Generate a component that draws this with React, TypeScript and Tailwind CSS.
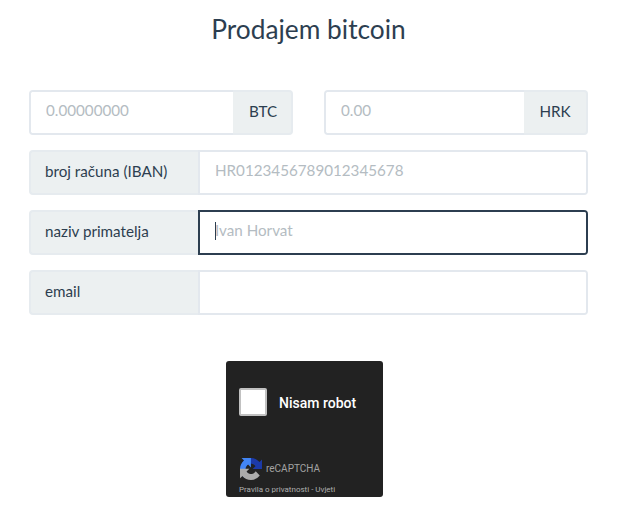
const inputCls =
  "w-full min-w-0 h-full bg-white px-[15px] pb-[5px] text-[15.2px] text-[#2c3e50] outline-none placeholder:text-[#b4bcc2]";
const addonCls =
  "flex items-center bg-[#ecf0f1] border-2 border-[#e6ebef] pb-[2px] text-[15.2px] text-[#2c3e50]";

function RecaptchaLogo() {
  return (
    <svg width="22" height="24" viewBox="0 0 64 64" className="shrink-0">
      <path d="M64 31.955l-.033-1.37V4.687l-7.16 7.16C50.948 4.674 42.033.093 32.05.093c-10.4 0-19.622 4.96-25.458 12.64l11.736 11.86a15.55 15.55 0 0 1 4.754-5.334c2.05-1.6 4.952-2.906 8.968-2.906.485 0 .86.057 1.135.163 4.976.393 9.288 3.14 11.828 7.124l-8.307 8.307L64 31.953" fill="#1c3aa9" />
      <path d="M31.862 0l-1.37.033H4.594l7.16 7.16C4.58 13.052 0 21.967 0 31.95c0 10.4 4.96 19.622 12.64 25.458l11.86-11.736a15.55 15.55 0 0 1-5.334-4.754c-1.6-2.05-2.906-4.952-2.906-8.968 0-.485.057-.86.163-1.135.393-4.976 3.14-9.288 7.124-11.828l8.307 8.307L31.86 0" fill="#4285f4" />
      <path d="M.001 31.955l.033 1.37v25.898l7.16-7.16c5.86 7.173 14.774 11.754 24.76 11.754 10.4 0 19.622-4.96 25.458-12.64L45.676 38.32a15.55 15.55 0 0 1-4.754 5.334c-2.05 1.6-4.952 2.906-8.968 2.906-.485 0-.86-.057-1.135-.163-4.976-.393-9.288-3.14-11.828-7.124l8.307-8.307-27.3-.01" fill="#ababab" />
    </svg>
  );
}

export default function App() {
  return (
    <div className="w-[625px] h-[527px] bg-white overflow-hidden font-['Lato',sans-serif] text-[#2c3e50]">
      <h1 className="pt-[11px] pr-[8px] text-center text-[26.3px] leading-[36px] font-normal text-[#2c3e50]">
        Prodajem bitcoin
      </h1>

      <div className="mt-[43px] ml-[29px] w-[559px] flex flex-col gap-[15px]">
        <div className="flex justify-between">
          <div className="flex w-[264px] h-[45px]">
            <div className="flex-1 min-w-0 border-2 border-r-0 border-[#e3e8ee] rounded-l-[4px] overflow-hidden">
              <input className={inputCls} placeholder="0.00000000" />
            </div>
            <div className={addonCls + " w-[60px] justify-center pl-[2px] rounded-r-[4px] border-l-0"}>BTC</div>
          </div>
          <div className="flex w-[264px] h-[45px]">
            <div className="flex-1 min-w-0 border-2 border-r-0 border-[#e3e8ee] rounded-l-[4px] overflow-hidden">
              <input className={inputCls} placeholder="0.00" />
            </div>
            <div className={addonCls + " w-[64px] justify-center rounded-r-[4px] border-l-0"}>HRK</div>
          </div>
        </div>

        <div className="flex h-[45px]">
          <div className={addonCls + " w-[169px] pl-[14px] rounded-l-[4px] border-r-0"}>broj računa (IBAN)</div>
          <div className="flex-1 min-w-0 border-2 border-[#e3e8ee] rounded-r-[4px] overflow-hidden">
            <input className={inputCls} placeholder="HR0123456789012345678" />
          </div>
        </div>

        <div className="flex h-[45px]">
          <div className={addonCls + " w-[169px] pl-[14px] rounded-l-[4px] border-r-0"}>naziv primatelja</div>
          <div className="relative flex-1 min-w-0 border-2 border-[#2c3e50] rounded-r-[4px] overflow-hidden">
            <input className={inputCls} placeholder="Ivan Horvat" />
            <span className="absolute left-[15px] top-[10px] h-[18px] w-px bg-[#2c3e50]" />
          </div>
        </div>

        <div className="flex h-[45px]">
          <div className={addonCls + " w-[169px] pl-[14px] rounded-l-[4px] border-r-0"}>email</div>
          <div className="flex-1 min-w-0 border-2 border-[#e3e8ee] rounded-r-[4px] overflow-hidden">
            <input className={inputCls} />
          </div>
        </div>
      </div>

      <div className="mt-[46px] ml-[226px] w-[157px] h-[136px] bg-[#222222] rounded-[3px] font-['Roboto',sans-serif] flex flex-col">
        <div className="flex items-center gap-[12px] pl-[13px] pt-[27px]">
          <div className="w-[28px] h-[28px] bg-white border-2 border-[#c1c1c1] rounded-[2px]" />
          <span className="text-[14px] mt-[3px] font-medium text-white">Nisam robot</span>
        </div>
        <div className="mt-auto pl-[14px] pb-[2px]">
          <div className="flex items-center gap-[4px]">
            <RecaptchaLogo />
            <span className="text-[10px] text-[#a3a3a3] -mt-[2px]">reCAPTCHA</span>
          </div>
          <div className="-ml-[1px] mt-[4px] text-[8px] leading-[10px] text-[#b0b0b0]">Pravila o privatnosti - Uvjeti</div>
        </div>
      </div>
    </div>
  );
}
